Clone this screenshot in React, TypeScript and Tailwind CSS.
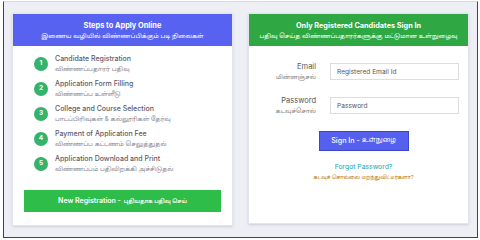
import React from "react"

const steps = [
  { en: "Candidate Registration", ta: "விண்ணப்பதாரர் பதிவு" },
  { en: "Application Form Filling", ta: "விண்ணப்ப உள்ளீடு" },
  { en: "College and Course Selection", ta: "பாடப்பிரிவுகள் & கல்லூரிகள் தேர்வு" },
  { en: "Payment of Application Fee", ta: "விண்ணப்ப கட்டணம் செலுத்துதல்" },
  { en: "Application Download and Print", ta: "விண்ணப்பம் பதிவிறக்கி அச்சிடுதல்" },
]

const font = "font-['Inter','Noto_Sans','Noto_Sans_Tamil',sans-serif]"

export default function App() {
  return (
    <div className={`w-[480px] h-[240px] bg-white ${font}`}>
      <div className="ml-[3px] mt-[1px] w-[475px] h-[237px] border border-t-[#d8d8e8] border-[#3b3b8e] bg-[#eeeef5] px-[8px] pt-[11px] flex gap-[15px] items-start">
        {/* left card */}
        <div className="w-[221px] h-[213px] bg-white border border-[#e4e4ec] shadow-sm flex flex-col">
          <div className="h-[32px] bg-[#5763f0] flex flex-col items-center justify-center text-white">
            <div className="text-[7.4px] font-bold leading-[11px]">Steps to Apply Online</div>
            <div className="text-[6.2px] leading-[10px]">இணைய வழியில் விண்ணப்பிக்கும் படி நிலைகள்</div>
          </div>
          <div className="flex flex-col pt-[7px] pl-[21px] gap-[4px]">
            {steps.map((s, i) => (
              <div key={i} className="flex items-center gap-[7px] h-[21px]">
                <div className="w-[14px] h-[14px] rounded-full bg-[#34b36a] text-white text-[6.5px] font-bold flex items-center justify-center">
                  {i + 1}
                </div>
                <div className="flex flex-col">
                  <div className="text-[7px] leading-[10px] text-[#5c5c6a] font-medium">{s.en}</div>
                  <div className="text-[6.2px] leading-[9px] text-[#8a8a96]">{s.ta}</div>
                </div>
              </div>
            ))}
          </div>
          <div className="px-[11px] mt-[16px]">
            <button className="w-full h-[22px] bg-[#2fbd4a] text-white flex items-center justify-center gap-[3px]">
              <span className="text-[7px] font-semibold">New Registration -</span>
              <span className="text-[5.4px] font-semibold">புதியதாக பதிவு செய்</span>
            </button>
          </div>
        </div>

        {/* right card */}
        <div className="w-[221px] h-[211px] bg-white border border-[#e4e4ec] shadow-sm flex flex-col">
          <div className="h-[32px] bg-[#2fa843] flex flex-col items-center justify-center text-white">
            <div className="text-[7.3px] font-bold leading-[11px]">Only Registered Candidates Sign In</div>
            <div className="text-[6.2px] leading-[10px]">பதிவு செய்த விண்ணப்பதாரர்களுக்கு மட்டுமான உள்நுழைவு</div>
          </div>
          <div className="flex flex-col pt-[16px] gap-[15px]">
            <div className="flex items-center gap-[14px]">
              <div className="w-[67px] flex flex-col items-end">
                <div className="text-[7.5px] leading-[10px] text-[#555]">Email</div>
                <div className="text-[6.2px] leading-[9px] text-[#888]">மின்னஞ்சல்</div>
              </div>
              <input
                className="w-[129px] h-[17px] border border-[#dcdce4] px-[6px] text-[6.6px] text-[#555] outline-none placeholder:text-[#555]"
                placeholder="Registered Email Id"
              />
            </div>
            <div className="flex items-center gap-[14px]">
              <div className="w-[67px] flex flex-col items-end">
                <div className="text-[7.5px] leading-[10px] text-[#555]">Password</div>
                <div className="text-[6.2px] leading-[9px] text-[#888]">கடவுச்சொல்</div>
              </div>
              <input
                className="w-[129px] h-[17px] border border-[#dcdce4] px-[6px] text-[6.6px] text-[#555] outline-none placeholder:text-[#555]"
                placeholder="Password"
              />
            </div>
          </div>
          <div className="flex flex-col items-center mt-[16px] pl-[10px]">
            <button className="w-[90px] h-[20px] bg-[#5561ee] border border-[#3b46c8] text-white flex items-center justify-center gap-[2px]">
              <span className="text-[7.2px] font-medium">Sign In -</span>
              <span className="text-[6.5px]">உள்நுழை</span>
            </button>
            <div className="mt-[11px] text-[6.8px] leading-[10px] text-[#1aa3b0]">Forgot Password?</div>
            <div className="mt-[1px] text-[5.2px] leading-[8px] text-[#c27a00]">கடவுச் சொல்லை மறந்துவிட்டீர்களா?</div>
          </div>
        </div>
      </div>
    </div>
  )
}
